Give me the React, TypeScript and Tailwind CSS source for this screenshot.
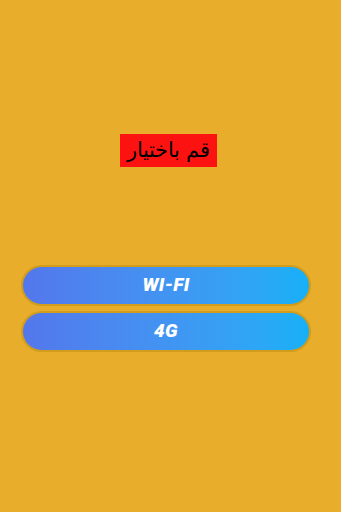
import React from "react";

export default function App() {
  const btn = (label: string) => (
    <div className="w-[290px] h-[41px] rounded-[21px] border-2 border-[#d29c1c] bg-[#d29c1c] ml-[21px]">
      <button className="w-full h-full rounded-[19px] bg-gradient-to-r from-[#5377ec] to-[#15b0f7] flex items-center justify-center text-white font-black italic text-[19px] tracking-[0.3px]" style={{ fontFamily: "Roboto, 'Liberation Sans', sans-serif" }}>
        {label}
      </button>
    </div>
  );
  return (
    <div className="w-[341px] h-[512px] bg-[#e8ae2b] flex flex-col overflow-hidden">
      <div className="mt-[134px] ml-[120px] w-[97px] h-[33px] bg-[#fd1212] flex items-center justify-center">
        <span dir="rtl" className="text-black text-[21px] leading-none font-light" style={{ fontFamily: "'DejaVu Sans', 'Noto Sans', sans-serif" }}>قم باختيار</span>
      </div>
      <div className="mt-[98px] flex flex-col gap-[5px]">
        {btn("WI-FI")}
        {btn("4G")}
      </div>
    </div>
  );
}
